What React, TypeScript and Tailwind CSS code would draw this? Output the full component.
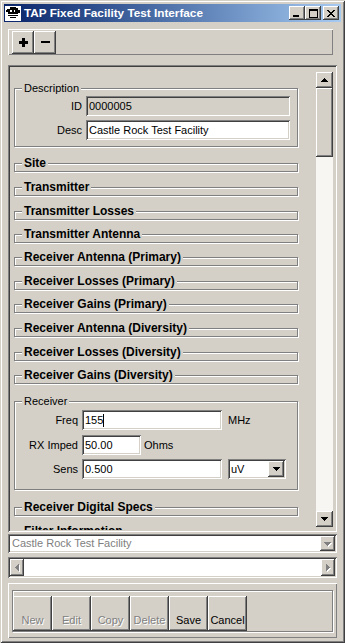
import React from "react";

const raised =
  "bg-[#d4d0c8] shadow-[inset_-1px_-1px_#404040,inset_1px_1px_#ffffff,inset_-2px_-2px_#808080,inset_2px_2px_#d4d0c8]";
const sunken =
  "shadow-[inset_1px_1px_#808080,inset_-1px_-1px_#ffffff,inset_2px_2px_#404040,inset_-2px_-2px_#d4d0c8]";
const etched = "border border-[#808080] shadow-[1px_1px_0_#ffffff,inset_1px_1px_0_#ffffff]";

type Dir = "up" | "down" | "left" | "right";

const arrowPaths: Record<Dir, string> = {
  up: "M3 0h1v1h1v1h1v1h1v1H0V3h1V2h1V1h1z",
  down: "M0 0h7v1H6v1H5v1H4v1H3V3H2V2H1V1H0z",
  left: "M3 0h1v7H3V6H2V5H1V4H0V3h1V2h1V1h1z",
  right: "M0 0h1v1h1v1h1v1h1v1H3v1H2v1H1v1H0z",
};

function Arrow({ dir, disabled }: { dir: Dir; disabled?: boolean }) {
  const vertical = dir === "up" || dir === "down";
  const w = vertical ? 7 : 4;
  const h = vertical ? 4 : 7;
  return (
    <svg
      width={w}
      height={h}
      viewBox={`0 0 ${w} ${h}`}
      shapeRendering="crispEdges"
      className={disabled ? "drop-shadow-[1px_1px_0_#ffffff]" : ""}
    >
      <path d={arrowPaths[dir]} fill={disabled ? "#808080" : "#000000"} />
    </svg>
  );
}

function Group({ title, mt }: { title: string; mt: string }) {
  return (
    <fieldset className={`${etched} w-[284px] shrink-0 pb-[1px] ${mt}`}>
      <legend className="ml-[7px] px-[2px] bg-[#d4d0c8] font-bold text-[12px] leading-[14px]">
        {title}
      </legend>
    </fieldset>
  );
}

function TitleButton({ children }: { children: React.ReactNode }) {
  return (
    <div className={`${raised} w-[16px] h-[14px] flex items-center justify-center`}>
      {children}
    </div>
  );
}

function ActionButton({ label, disabled }: { label: string; disabled?: boolean }) {
  return (
    <div className={`${raised} w-[39px] h-[35px] flex items-end justify-center pb-[3px]`}>
      <span
        className={
          disabled ? "text-[#808080] [text-shadow:1px_1px_0_#ffffff]" : "text-black"
        }
      >
        {label}
      </span>
    </div>
  );
}

const groups = [
  { title: "Site", mt: "mt-[9px]" },
  { title: "Transmitter", mt: "mt-[8px]" },
  { title: "Transmitter Losses", mt: "mt-[8px]" },
  { title: "Transmitter Antenna", mt: "mt-[7px]" },
  { title: "Receiver Antenna (Primary)", mt: "mt-[7px]" },
  { title: "Receiver Losses (Primary)", mt: "mt-[8px]" },
  { title: "Receiver Gains (Primary)", mt: "mt-[7px]" },
  { title: "Receiver Antenna (Diversity)", mt: "mt-[8px]" },
  { title: "Receiver Losses (Diversity)", mt: "mt-[8px]" },
  { title: "Receiver Gains (Diversity)", mt: "mt-[7px]" },
];

export default function App() {
  return (
    <div className="w-[345px] h-[643px] bg-[#d4d0c8] p-[4px] flex flex-col overflow-hidden shadow-[inset_1px_1px_#d4d0c8,inset_-1px_-1px_#404040,inset_2px_2px_#ffffff,inset_-2px_-2px_#808080] font-['Liberation_Sans',Arial,sans-serif] text-[11px] text-black">
      {/* title bar */}
      <div className="h-[18px] shrink-0 flex items-center bg-linear-to-r from-[#0a246a] to-[#a6caf0] pl-[1px] pr-[2px]">
        <svg width="16" height="16" viewBox="0 0 16 16" shapeRendering="crispEdges">
          <rect x="0" y="1" width="16" height="15" fill="#ffffff" />
          <path d="M2 4h3V2h6v1h2v2h2v3h-2v1H3V7H1V5h1z" fill="#000000" />
          <path d="M5 5h5v2H5z" fill="#ffffff" />
          <path d="M7 5h2v2H7z" fill="#000000" />
          <path d="M3 10h10v1H3zM5 12h6v1H5z" fill="#000000" />
        </svg>
        <span className="ml-[3px] text-white font-bold text-[11.75px] leading-[14px]">
          TAP Fixed Facility Test Interface
        </span>
        <div className="ml-auto flex items-center">
          <TitleButton>
            <svg width="6" height="2" viewBox="0 0 6 2" className="mt-[6px] mr-[2px]">
              <rect width="6" height="2" fill="#000000" />
            </svg>
          </TitleButton>
          <TitleButton>
            <svg width="9" height="9" viewBox="0 0 9 9" shapeRendering="crispEdges">
              <path d="M0 0h9v9H0zM1 2v6h7V2z" fill="#000000" fillRule="evenodd" />
            </svg>
          </TitleButton>
          <div className="ml-[2px]">
            <TitleButton>
              <svg width="8" height="7" viewBox="0 0 8 7" shapeRendering="crispEdges">
                <path
                  d="M0 0h2v1h1v1h2V1h1V0h2v1H7v1H6v1H5v1h1v1h1v1h1v1H6V6H5V5H3v1H2v1H0V6h1V5h1V4h1V3H2V2H1V1H0z"
                  fill="#000000"
                />
              </svg>
            </TitleButton>
          </div>
        </div>
      </div>

      {/* toolbar */}
      <div className="mt-[7px] ml-[4px] mr-[8px] h-[26px] shrink-0 shadow-[inset_1px_1px_#ffffff,inset_-1px_-1px_#808080] pt-[2px] pl-[4px] flex">
        <div className={`${raised} w-[22px] h-[23px] flex items-center justify-center`}>
          <svg width="9" height="9" viewBox="0 0 9 9" shapeRendering="crispEdges">
            <path d="M3 0h3v3h3v3H6v3H3V6H0V3h3z" fill="#000000" />
          </svg>
        </div>
        <div className={`${raised} w-[22px] h-[23px] flex items-center justify-center`}>
          <svg width="9" height="3" viewBox="0 0 9 3" shapeRendering="crispEdges">
            <rect width="9" height="2" y="0" fill="#000000" />
          </svg>
        </div>
      </div>

      {/* scrolling form */}
      <div className={`${sunken} mx-[4px] mt-[10px] h-[467px] shrink-0 p-[2px] flex`}>
        <div className="flex-1 overflow-hidden pl-[4px] flex flex-col items-start">
          <fieldset className={`${etched} w-[284px] shrink-0 mt-[14px] pb-[6px]`}>
            <legend className="ml-[7px] px-[2px] bg-[#d4d0c8] leading-[14px]">Description</legend>
            <div className="flex items-center mt-[1px]">
              <span className="w-[67px] text-right">ID</span>
              <div className={`${sunken} ml-[4px] w-[204px] h-[20px] px-[3px] flex items-center`}>
                0000005
              </div>
            </div>
            <div className="flex items-center mt-[4px]">
              <span className="w-[67px] text-right">Desc</span>
              <div className={`${sunken} bg-white ml-[4px] w-[204px] h-[20px] px-[3px] flex items-center`}>
                Castle Rock Test Facility
              </div>
            </div>
          </fieldset>

          {groups.map((g) => (
            <Group key={g.title} title={g.title} mt={g.mt} />
          ))}

          <fieldset className={`${etched} w-[284px] shrink-0 mt-[10px] pb-[10px]`}>
            <legend className="ml-[7px] px-[2px] bg-[#d4d0c8] leading-[14px]">Receiver</legend>
            <div className="flex items-center mt-[2px]">
              <span className="w-[63px] text-right">Freq</span>
              <div className={`${sunken} bg-white ml-[4px] w-[140px] h-[20px] px-[3px] flex items-center`}>
                155
                <span className="w-[1px] h-[13px] bg-black" />
              </div>
              <span className="ml-[6px]">MHz</span>
            </div>
            <div className="flex items-center mt-[5px]">
              <span className="w-[63px] text-right">RX Imped</span>
              <div className={`${sunken} bg-white ml-[4px] w-[59px] h-[20px] px-[3px] flex items-center`}>
                50.00
              </div>
              <span className="ml-[3px]">Ohms</span>
            </div>
            <div className="flex items-center mt-[4px]">
              <span className="w-[63px] text-right">Sens</span>
              <div className={`${sunken} bg-white ml-[4px] w-[140px] h-[20px] px-[3px] flex items-center`}>
                0.500
              </div>
              <div className={`${sunken} bg-white ml-[6px] w-[58px] h-[20px] pl-[3px] pr-[2px] flex items-center`}>
                <span className="flex-1">uV</span>
                <div className={`${raised} w-[16px] h-[16px] flex items-center justify-center`}>
                  <Arrow dir="down" />
                </div>
              </div>
            </div>
          </fieldset>

          <Group title="Receiver Digital Specs" mt="mt-[10px]" />
          <Group title="Filter Information" mt="mt-[8px]" />
        </div>

        {/* vertical scrollbar */}
        <div className="w-[17px] mt-[5px] mb-[3px] mr-[2px] flex flex-col">
          <div className={`${raised} h-[16px] shrink-0 flex items-center justify-center`}>
            <Arrow dir="up" />
          </div>
          <div className={`${raised} h-[69px] shrink-0`} />
          <div className="flex-1 bg-[#f7f6f3]" />
          <div className={`${raised} h-[16px] shrink-0 flex items-center justify-center`}>
            <Arrow dir="down" />
          </div>
        </div>
      </div>

      {/* facility picker */}
      <div className={`${sunken} bg-white mx-[4px] mt-[2px] h-[19px] shrink-0 flex items-center pl-[4px] pr-[2px]`}>
        <span className="flex-1 text-[#808080]">Castle Rock Test Facility</span>
        <div className={`${raised} w-[15px] h-[15px] flex items-center justify-center`}>
          <Arrow dir="down" disabled />
        </div>
      </div>

      {/* horizontal scrollbar */}
      <div className={`${sunken} bg-white mx-[4px] mt-[4px] h-[21px] shrink-0 p-[2px] flex`}>
        <div className={`${raised} w-[14px] flex items-center justify-center`}>
          <Arrow dir="left" disabled />
        </div>
        <div className="flex-1 bg-white" />
        <div className={`${raised} w-[14px] flex items-center justify-center`}>
          <Arrow dir="right" disabled />
        </div>
      </div>

      {/* action buttons */}
      <div className="mx-[4px] mt-[5px] h-[55px] shrink-0 shadow-[inset_1px_1px_#ffffff,inset_-1px_-1px_#808080] pt-[7px] px-[4px] pb-[6px] flex">
        <div className={`${etched} flex-1 pt-[2px] pl-[0px] flex items-end`}>
          <ActionButton label="New" disabled />
          <ActionButton label="Edit" disabled />
          <ActionButton label="Copy" disabled />
          <ActionButton label="Delete" disabled />
          <ActionButton label="Save" />
          <ActionButton label="Cancel" />
        </div>
      </div>
    </div>
  );
}
